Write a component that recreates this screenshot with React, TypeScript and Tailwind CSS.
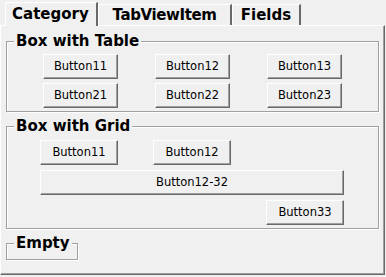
import React from "react";

const ui = { fontFamily: '"DejaVu Sans", Tahoma, sans-serif' };

function Btn({ label, className = "" }: { label: string; className?: string }) {
  return (
    <button
      className={`h-[25px] bg-[#f0f0f0] border-t border-l border-white border-r border-b border-r-[#696969] border-b-[#696969] shadow-[inset_-1px_-1px_0_#a0a0a0] text-[11.5px] text-black leading-none ${className}`}
      style={ui}
    >
      {label}
    </button>
  );
}

function Group({
  title,
  className = "",
  children,
}: {
  title: string;
  className?: string;
  children?: React.ReactNode;
}) {
  return (
    <fieldset
      className={`border border-[#a0a0a0] shadow-[1px_1px_0_#fff,inset_1px_1px_0_#fff] ${className}`}
    >
      <legend className="ml-[7px] px-[2px] bg-[#f0f0f0] text-[15px] font-bold leading-[17px] text-black">
        {title}
      </legend>
      {children}
    </fieldset>
  );
}

export default function App() {
  return (
    <div className="w-[386px] h-[277px] bg-[#f0f0f0] overflow-hidden select-none" style={ui}>
      {/* tab strip */}
      <div className="flex items-end h-[25px] pl-[5px]">
        <div className="relative z-10 h-[24px] mb-[-1px] w-[93px] bg-[#f0f0f0] border-t border-l border-white border-r-2 border-r-[#696969] pl-[6px] pt-[3px] text-[15px] font-bold leading-[17px]">
          Category
        </div>
        <div className="h-[21px] w-[134px] flex justify-center border-t border-l border-white border-r-2 border-r-[#696969] pt-[2px] text-[15px] font-bold leading-[17px] tracking-[-0.4px]">
          TabViewItem
        </div>
        <div className="h-[21px] w-[69px] flex justify-center border-t border-l border-white border-r-2 border-r-[#696969] pt-[2px] text-[15px] font-bold leading-[17px]">
          Fields
        </div>
      </div>

      {/* page */}
      <div className="w-[385px] h-[250px] border-t border-l border-white border-r border-b border-r-[#696969] border-b-[#696969] shadow-[inset_-1px_-1px_0_#a0a0a0] pl-[5px] pt-[7px]">
        <Group title="Box with Table" className="w-[373px] pt-[4px] pb-[3px]">
          <div className="grid grid-cols-[75px_75px_75px] gap-x-[37px] gap-y-[4px] pl-[36px]">
            <Btn label="Button11" />
            <Btn label="Button12" />
            <Btn label="Button13" />
            <Btn label="Button21" />
            <Btn label="Button22" />
            <Btn label="Button23" />
          </div>
        </Group>

        <Group title="Box with Grid" className="w-[373px] mt-[6px] pt-[5px] pb-[3px]">
          <div className="grid grid-cols-[78px_78px_78px] gap-x-[35px] gap-y-[5px] pl-[33px]">
            <Btn label="Button11" />
            <Btn label="Button12" />
            <div />
            <Btn label="Button12-32" className="col-span-3" />
            <div />
            <div />
            <Btn label="Button33" />
          </div>
        </Group>

        <Group title="Empty" className="w-[72px] mt-[6px] pb-[7px]" />
      </div>
    </div>
  );
}
